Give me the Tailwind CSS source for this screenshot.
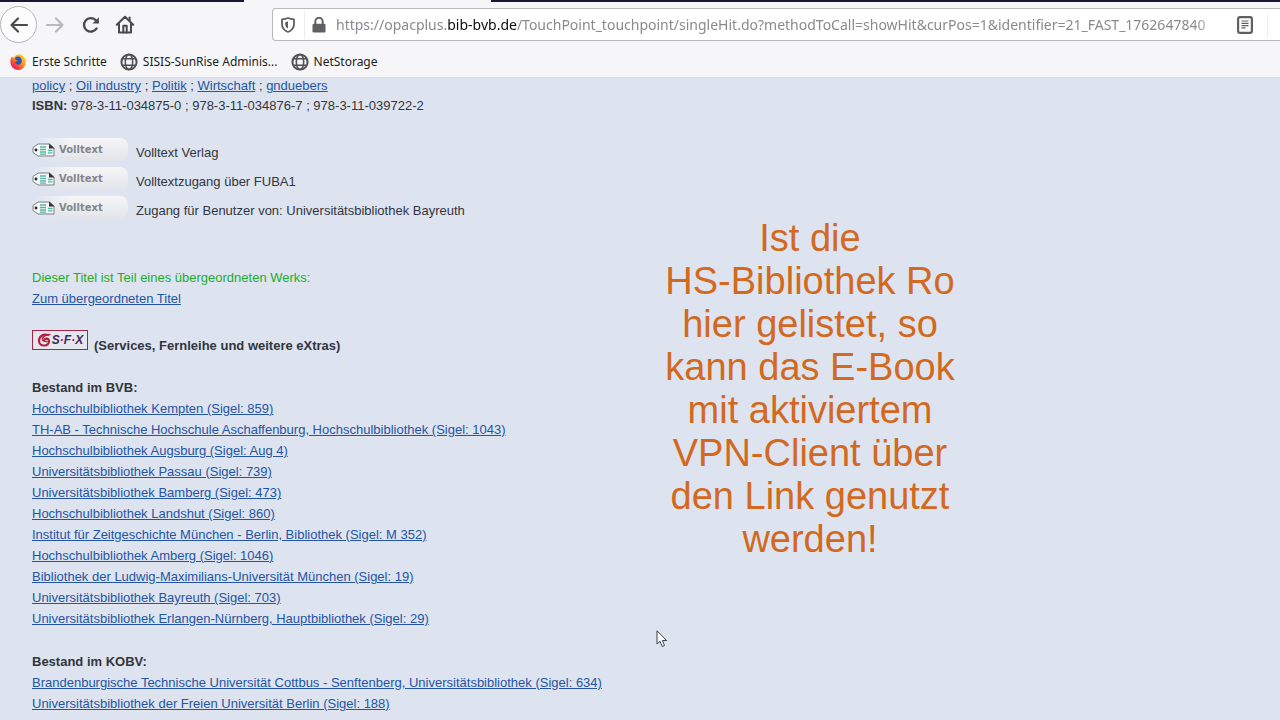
<!DOCTYPE html>
<html lang="de">
  <head>
    <meta charset="UTF-8" />
    <meta name="viewport" content="width=device-width, initial-scale=1.0" />
    <title>OPACplus - Volltreffer</title>
    <script src="https://cdn.jsdelivr.net/npm/@tailwindcss/browser@4"></script>
  </head>
  <body class="bg-[#dde4f0]">
    <div class="relative flex h-screen flex-col overflow-hidden">
      <!-- Browser chrome -->
      <header class="shrink-0 border-b border-[#dcdde2] bg-[#f6f6f8] font-['Noto_Sans','Open_Sans',sans-serif]">
        <div class="flex h-[2px]">
          <div class="w-[244px] bg-[#1c1538]"></div>
          <div class="w-[247px]"></div>
          <div class="flex-1 bg-[#1c1538]"></div>
        </div>

        <div class="flex h-[45px] items-center">
          <nav class="flex w-[272px] shrink-0 items-center text-[#4a4a4d]">
            <button aria-label="Zurück" class="flex size-[37px] items-center justify-center rounded-full border border-[#b5b5b8] bg-[#fcfcfc]">
              <svg class="size-5" viewBox="0 0 20 20" fill="none" stroke="currentColor" stroke-width="2.2" stroke-linecap="round" stroke-linejoin="round"><path d="M18 10H2.5M9 3.5L2.5 10L9 16.5" /></svg>
            </button>
            <button aria-label="Vor" class="ml-2 flex size-5 items-center justify-center text-[#b9b9bb]">
              <svg class="size-5" viewBox="0 0 20 20" fill="none" stroke="currentColor" stroke-width="2.2" stroke-linecap="round" stroke-linejoin="round"><path d="M2 10H17.5M11 3.5L17.5 10L11 16.5" /></svg>
            </button>
            <button aria-label="Neu laden" class="ml-4 flex size-5 items-center justify-center">
              <svg class="size-5" viewBox="0 0 20 20" fill="none" stroke="currentColor" stroke-width="2.3" stroke-linecap="round"><path d="M15.6 13.4A6.8 6.8 0 1 1 14.6 5" /><path d="M17.9 2.2V8.6H11.5Z" fill="currentColor" stroke="none" /></svg>
            </button>
            <button aria-label="Startseite" class="ml-[14px] flex size-5 items-center justify-center">
              <svg class="size-5" viewBox="0 0 20 20" fill="none" stroke="currentColor" stroke-width="2" stroke-linecap="round" stroke-linejoin="round"><path d="M1.8 9.8L10 1.8L18.2 9.8M4 9V17.6H16V9" /><path d="M8.3 17.5V10.8H11.7V17.5" /><path d="M14.6 2.6V5.6" /></svg>
            </button>
          </nav>

          <div class="flex h-[33px] min-w-0 flex-1 items-center rounded-l-sm border border-r-0 border-[#b9b9bc] bg-white">
            <svg class="ml-[7px] size-4 shrink-0 text-[#606064]" viewBox="0 0 16 16" fill="none" stroke="currentColor" stroke-width="1.8" stroke-linejoin="round"><path d="M8 1C6 1.9 4 2.2 2 2.3V7C2 11 4.4 13.6 8 15C11.6 13.6 14 11 14 7V2.3C12 2.2 10 1.9 8 1Z" /><path d="M8 4.5L5.3 5V7.5C5.3 9.5 6.3 10.8 8 11.6Z" fill="currentColor" stroke="none" /></svg>
            <span class="ml-2 h-7 w-px shrink-0 bg-[#ececee]"></span>
            <svg class="ml-[6px] size-4 shrink-0 text-[#606064]" viewBox="0 0 16 16"><rect x="1.5" y="6.8" width="13" height="8.7" rx="1.3" fill="currentColor" /><path d="M4.3 8V4.5A3.7 3.7 0 0 1 11.7 4.5V8" fill="none" stroke="currentColor" stroke-width="2" /></svg>
            <div role="textbox" aria-label="Adresse" contenteditable="true" class="ml-[9px] min-w-0 flex-1 overflow-hidden mask-r-from-96% whitespace-nowrap text-[14px] leading-6 text-[#8a8a8e]">https://opacplus.<span class="text-[#0c0c0d]">bib-bvb.de</span>/TouchPoint_touchpoint/singleHit.do?methodToCall=showHit&amp;curPos=1&amp;identifier=21_FAST_1762647840</div>
            <button aria-label="Leseansicht" class="ml-2 shrink-0 text-[#606064]">
              <svg class="h-[18px] w-4" viewBox="0 0 16 18" fill="none" stroke="currentColor"><rect x="1.1" y="1.1" width="13.8" height="15.8" rx="1.8" stroke-width="2.2" /><path d="M4.5 5H11.5M4.5 7.3H11.5M4.5 9.6H11.5M4.5 11.9H8.5" stroke-width="1.2" /></svg>
            </button>
            <span class="mr-3 ml-[14px] h-6 w-px shrink-0 bg-[#ececee]"></span>
          </div>
        </div>

        <div class="flex h-[30px] items-center pl-[10px] text-[12px] text-[#1c1c1f]">
          <a href="#" class="flex items-center">
            <svg class="mr-[6px] size-4" viewBox="0 0 16 16">
              <defs>
                <linearGradient id="fox" x1="1" y1="0" x2="0.2" y2="1"><stop offset="0" stop-color="#ffe226" /><stop offset="0.45" stop-color="#ff9a1f" /><stop offset="0.8" stop-color="#f3363f" /><stop offset="1" stop-color="#e31587" /></linearGradient>
              </defs>
              <path d="M1.8 2.5L3.6 4C5 1.5 7 .8 9.2 .3C13 1 15.8 4 15.8 8.2A7.7 7.7 0 0 1 .4 8.2C.3 6 .9 4 1.8 2.5Z" fill="url(#fox)" />
              <path d="M5.5 3.5C8 1.5 11.5 3 11.8 6.5C12 9.5 9.8 11 7.8 10.8C5.9 10.6 5 9 5.3 7.8L8 7L5.2 5.5Z" fill="#2a56b5" />
            </svg>
            Erste Schritte
          </a>
          <a href="#" class="ml-[13px] flex items-center">
            <svg class="mr-[5px] size-[18px]" viewBox="0 0 18 18" fill="none" stroke="#505054" stroke-width="1.5"><circle cx="9" cy="9" r="7.6" stroke-width="2" /><ellipse cx="9" cy="9" rx="3.7" ry="7.6" /><path d="M2.5 5.7H15.5M2.5 12.3H15.5" /></svg>
            SISIS-SunRise Adminis...
          </a>
          <a href="#" class="ml-[13px] flex items-center">
            <svg class="mr-[5px] size-[18px]" viewBox="0 0 18 18" fill="none" stroke="#505054" stroke-width="1.5"><circle cx="9" cy="9" r="7.6" stroke-width="2" /><ellipse cx="9" cy="9" rx="3.7" ry="7.6" /><path d="M2.5 5.7H15.5M2.5 12.3H15.5" /></svg>
            NetStorage
          </a>
        </div>
      </header>

      <!-- Catalogue record -->
      <main class="flex-1 overflow-hidden pl-8 font-['Liberation_Sans',Arial,sans-serif] text-[13px] leading-[21px] text-[#33353d]">
        <p class="leading-4">
          <a href="#" class="text-[#2554a4] underline">policy</a> ;
          <a href="#" class="text-[#2554a4] underline">Oil industry</a> ;
          <a href="#" class="text-[#2554a4] underline">Politik</a> ;
          <a href="#" class="text-[#2554a4] underline">Wirtschaft</a> ;
          <a href="#" class="text-[#2554a4] underline">gnduebers</a>
        </p>
        <p class="leading-6"><strong>ISBN:</strong> 978-3-11-034875-0 ; 978-3-11-034876-7 ; 978-3-11-039722-2</p>

        <ul class="mt-5">
          <li class="flex h-[29px] items-center gap-2">
            <button class="flex h-[23px] w-24 items-center self-start rounded-lg bg-[linear-gradient(to_right,#dde4f0,transparent_40%),linear-gradient(to_bottom,#f6f6f7,#e2e4ea)] font-['DejaVu_Sans',sans-serif] text-[10px] font-bold text-[#85858a]">
              <svg class="mr-1 h-[14px] w-[23px]" viewBox="0 0 23 14"><path d="M6 1H17.5L22 5V13H6L1 9.5V4.5Z" fill="#f4f8f8" stroke="#7a8184" stroke-linejoin="round" /><path d="M17 .5L22.5 5.5H17Z" fill="#333" /><circle cx="4" cy="7" r="1.4" fill="#222" /><path d="M8 4H14M8 6.5H14M8 9H14M8 11.200H14M16 7.500H20.500M16 9.800H20.500" stroke="#58b4a4" stroke-width="1.3" /></svg>
              Volltext
            </button>
            <span>Volltext Verlag</span>
          </li>
          <li class="flex h-[29px] items-center gap-2">
            <button class="flex h-[23px] w-24 items-center self-start rounded-lg bg-[linear-gradient(to_right,#dde4f0,transparent_40%),linear-gradient(to_bottom,#f6f6f7,#e2e4ea)] font-['DejaVu_Sans',sans-serif] text-[10px] font-bold text-[#85858a]">
              <svg class="mr-1 h-[14px] w-[23px]" viewBox="0 0 23 14"><path d="M6 1H17.5L22 5V13H6L1 9.5V4.5Z" fill="#f4f8f8" stroke="#7a8184" stroke-linejoin="round" /><path d="M17 .5L22.5 5.5H17Z" fill="#333" /><circle cx="4" cy="7" r="1.4" fill="#222" /><path d="M8 4H14M8 6.5H14M8 9H14M8 11.200H14M16 7.500H20.500M16 9.800H20.500" stroke="#58b4a4" stroke-width="1.3" /></svg>
              Volltext
            </button>
            <span>Volltextzugang über FUBA1</span>
          </li>
          <li class="flex h-[29px] items-center gap-2">
            <button class="flex h-[23px] w-24 items-center self-start rounded-lg bg-[linear-gradient(to_right,#dde4f0,transparent_40%),linear-gradient(to_bottom,#f6f6f7,#e2e4ea)] font-['DejaVu_Sans',sans-serif] text-[10px] font-bold text-[#85858a]">
              <svg class="mr-1 h-[14px] w-[23px]" viewBox="0 0 23 14"><path d="M6 1H17.5L22 5V13H6L1 9.5V4.5Z" fill="#f4f8f8" stroke="#7a8184" stroke-linejoin="round" /><path d="M17 .5L22.5 5.5H17Z" fill="#333" /><circle cx="4" cy="7" r="1.4" fill="#222" /><path d="M8 4H14M8 6.5H14M8 9H14M8 11.200H14M16 7.500H20.500M16 9.800H20.500" stroke="#58b4a4" stroke-width="1.3" /></svg>
              Volltext
            </button>
            <span>Zugang für Benutzer von: Universitätsbibliothek Bayreuth</span>
          </li>
        </ul>

        <p class="mt-[42px] text-[#22ac2c]">Dieser Titel ist Teil eines übergeordneten Werks:</p>
        <p><a href="#" class="text-[#2554a4] underline">Zum übergeordneten Titel</a></p>

        <div class="mt-[21px] flex h-[26px] items-end gap-[6px]">
          <a href="#" aria-label="SFX" class="flex h-5 w-14 items-center justify-center self-start border border-[#a02745] bg-[#e6e6ee] text-[12px] font-bold text-[#3d2a5c] italic">
            <svg class="mr-px size-[14px]" viewBox="0 0 14 14" fill="none" stroke="#b3203f" stroke-linecap="round"><path d="M11 2C6 .5 2 3.500 2 8C2 11 4.500 12.500 7 12.500C10.500 12.500 12.500 10 12 7.500C11.500 5.500 9 5 7.500 6.500" stroke-width="2.200" /><path d="M12.800 1.500C9 1.500 5.500 3.500 5.500 6C5.500 8 8 8.500 10 8.500" stroke-width="1.500" /></svg>
            S<span class="text-[#b3203f]">·</span>F<span class="text-[#b3203f]">·</span>X
          </a>
          <strong>(Services, Fernleihe und weitere eXtras)</strong>
        </div>

        <h2 class="mt-[21px] font-bold">Bestand im BVB:</h2>
        <ul class="text-[#2554a4] underline">
          <li><a href="#">Hochschulbibliothek Kempten (Sigel: 859)</a></li>
          <li><a href="#">TH-AB - Technische Hochschule Aschaffenburg, Hochschulbibliothek (Sigel: 1043)</a></li>
          <li><a href="#">Hochschulbibliothek Augsburg (Sigel: Aug 4)</a></li>
          <li><a href="#">Universitätsbibliothek Passau (Sigel: 739)</a></li>
          <li><a href="#">Universitätsbibliothek Bamberg (Sigel: 473)</a></li>
          <li><a href="#">Hochschulbibliothek Landshut (Sigel: 860)</a></li>
          <li><a href="#">Institut für Zeitgeschichte München - Berlin, Bibliothek (Sigel: M 352)</a></li>
          <li><a href="#">Hochschulbibliothek Amberg (Sigel: 1046)</a></li>
          <li><a href="#">Bibliothek der Ludwig-Maximilians-Universität München (Sigel: 19)</a></li>
          <li><a href="#">Universitätsbibliothek Bayreuth (Sigel: 703)</a></li>
          <li><a href="#">Universitätsbibliothek Erlangen-Nürnberg, Hauptbibliothek (Sigel: 29)</a></li>
        </ul>

        <h2 class="mt-[22px] font-bold">Bestand im KOBV:</h2>
        <ul class="text-[#2554a4] underline">
          <li><a href="#">Brandenburgische Technische Universität Cottbus - Senftenberg, Universitätsbibliothek (Sigel: 634)</a></li>
          <li><a href="#">Universitätsbibliothek der Freien Universität Berlin (Sigel: 188)</a></li>
        </ul>
      </main>

      <!-- Caption on top of the recording -->
      <p class="absolute top-[217px] left-[650px] w-[320px] text-center font-['Liberation_Sans',Arial,sans-serif] text-[38px] leading-[43px] text-[#d2691e]">
        Ist die<br />HS-Bibliothek Ro<br />hier gelistet, so<br />kann das E-Book<br />mit aktiviertem<br />VPN-Client über<br />den Link genutzt<br />werden!
      </p>

      <svg class="absolute top-[630px] left-[656px] h-[18px] w-3" viewBox="0 0 12 18"><path d="M1 .8V14L4 11.3L6.2 16.5L8.5 15.5L6.4 10.5H10.7Z" fill="#fff" stroke="#3a3f4a" stroke-width="1" /></svg>
    </div>
  </body>
</html>
